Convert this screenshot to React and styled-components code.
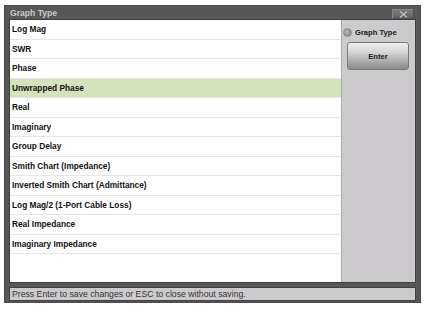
import React from 'react'
import styled, { createGlobalStyle } from 'styled-components'

const items = [
    'Log Mag',
    'SWR',
    'Phase',
    'Unwrapped Phase',
    'Real',
    'Imaginary',
    'Group Delay',
    'Smith Chart (Impedance)',
    'Inverted Smith Chart (Admittance)',
    'Log Mag/2 (1-Port Cable Loss)',
    'Real Impedance',
    'Imaginary Impedance',
]

const App = () => {
    return (
        <>
            <Global />
            <Window>
                <TitleBar>
                    <Title>Graph Type</Title>
                    <CloseBtn>
                        <svg width="9" height="7" viewBox="0 0 9 7">
                            <path d="M1 0.5 L8 6.5 M8 0.5 L1 6.5" stroke="#c4c4c4" strokeWidth="1.1" fill="none" />
                        </svg>
                    </CloseBtn>
                </TitleBar>
                <Body>
                    <List>
                        {items.map((item, index) => (
                            <Row key={item} selected={index === 3}>{item}</Row>
                        ))}
                    </List>
                    <Panel>
                        <RadioLine>
                            <Radio />
                            <RadioLabel>Graph Type</RadioLabel>
                        </RadioLine>
                        <EnterBtn>Enter</EnterBtn>
                    </Panel>
                </Body>
                <Status>Press Enter to save changes or ESC to close without saving.</Status>
            </Window>
        </>
    )
}

export default App


const Global = createGlobalStyle`
    body {
        margin: 0;
        background: #ffffff;
        font-family: "Liberation Sans", Arial, sans-serif;
    }
`

const Window = styled.div`
    margin: 5px 0 0 4px;
    width: 417px;
    height: 298px;
    box-sizing: border-box;
    background-color: #575757;
    border: 1px solid #4a4a4a;
    display: flex;
    flex-direction: column;
`

const TitleBar = styled.div`
    height: 14px;
    display: flex;
    align-items: center;
    justify-content: space-between;
    padding: 0 6px 0 5px;
`

const Title = styled.div`
    font-size: 8.6px;
    font-weight: bold;
    color: #c9c9c9;
`

const CloseBtn = styled.div`
    width: 22px;
    height: 10px;
    margin-top: 2px;
    box-sizing: border-box;
    background: linear-gradient(#7a7a7a, #656565);
    border: 1px solid #888888;
    border-right-color: #4d4d4d;
    border-bottom-color: #4d4d4d;
    display: flex;
    align-items: center;
    justify-content: center;
`

const Body = styled.div`
    height: 262px;
    margin: 0 5px;
    display: flex;
    box-shadow: 0 0 0 1px #404040;
`

const List = styled.div`
    flex: 1;
    background-color: #ffffff;
    border-right: 1px solid #a9a9a9;
`

const Row = styled.div`
    height: 19.5px;
    box-sizing: border-box;
    display: flex;
    align-items: center;
    padding-left: 2px;
    font-size: 8.3px;
    font-weight: bold;
    color: #111111;
    border-bottom: 1px solid #e6e6e6;
    background-color: ${props => props.selected ? '#d3e3bb' : '#ffffff'};
`

const Panel = styled.div`
    width: 73px;
    background-color: #cdcace;
    padding: 7px 0 0 1px;
    box-sizing: border-box;
`

const RadioLine = styled.div`
    display: flex;
    align-items: center;
    height: 10px;
`

const Radio = styled.div`
    width: 9px;
    height: 9px;
    border-radius: 50%;
    box-sizing: border-box;
    background: radial-gradient(circle at 40% 40%, #b8b8b8, #7c7c7c);
    border: 1px solid #8d8d8d;
`

const RadioLabel = styled.div`
    margin-left: 3px;
    font-size: 7.6px;
    font-weight: bold;
    color: #1a1a1a;
`

const EnterBtn = styled.div`
    margin: 5px 0 0 4px;
    width: 62px;
    height: 28px;
    box-sizing: border-box;
    border: 1px solid #7a7a7a;
    border-radius: 3px;
    background: linear-gradient(#f0f0f0 0%, #d6d6d6 35%, #9a9a9a 85%, #8a8a8a 100%);
    display: flex;
    align-items: center;
    justify-content: center;
    font-size: 7.6px;
    font-weight: bold;
    color: #1a1a1a;
`

const Status = styled.div`
    margin: 6px 5px 0 5px;
    height: 12px;
    box-sizing: border-box;
    background-color: #cdcace;
    box-shadow: 0 0 0 1px #404040;
    display: flex;
    align-items: center;
    padding-left: 2px;
    font-size: 8.7px;
    color: #333333;
`
